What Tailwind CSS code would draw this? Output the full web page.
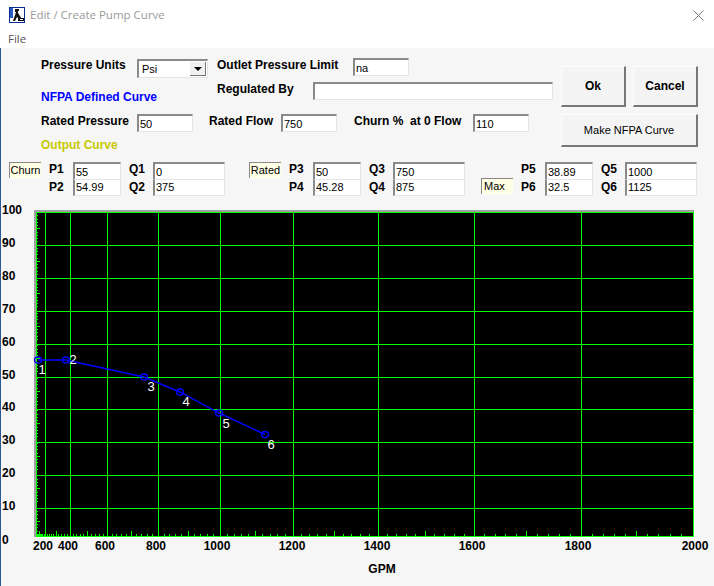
<!DOCTYPE html>
<html lang="en">
<head>
  <meta charset="UTF-8" />
  <title>Edit / Create Pump Curve</title>
  <script src="https://cdn.jsdelivr.net/npm/@tailwindcss/browser@4"></script>
</head>
<body class="w-[714px] h-[586px] overflow-hidden bg-white font-['Liberation_Sans',sans-serif] text-[12px] text-black">
  <!-- title bar -->
  <header class="h-[30px] flex items-center pl-[9px] pr-[10px]">
    <svg class="w-[16px] h-[16px]" viewBox="0 0 16 16">
      <rect x="0.5" y="0.5" width="15" height="15" fill="#fff" stroke="#0a2f8f" />
      <path d="M1 1h3v10H1z" fill="#2a5fc8" />
      <path d="M6 2h4v2H9v2l2 3 1 2h3v3H9V11L8 10l-2 4H4l2-6 1-3H6z" fill="#111" />
      <path d="M11 12h3v1h-3z" fill="#fff" />
    </svg>
    <span class="ml-[5px] font-['Open_Sans',sans-serif] text-[11.5px] text-[#9a9a9a]">Edit / Create Pump Curve</span>
    <svg class="ml-auto w-[11px] h-[11px]" viewBox="0 0 11 11">
      <path d="M0.5 0.5l10 10M10.5 0.5l-10 10" stroke="#777" fill="none" />
    </svg>
  </header>
  <nav class="h-[18px] pl-[8px] font-['Open_Sans',sans-serif] text-[11.5px] leading-[18px] text-[#555]">File</nav>

  <main class="h-[538px] bg-[#f6f6f6] border-l border-l-[#2b5797]">
    <section class="flex h-[106px]">
      <div class="w-[560px] pl-[40px] font-bold">
        <div class="flex items-start h-[20px] mt-[10px]">
          <label class="w-[96px] leading-[14px]">Pressure Units</label>
          <div class="flex items-center justify-between w-[71px] h-[19px] mt-[1px] pl-[3px] pr-[1px] bg-white border-t-2 border-l-2 border-t-[#8a8a8a] border-l-[#8a8a8a] border-r border-b border-r-[#e4e4e4] border-b-[#e4e4e4] font-normal">
            <span class="text-[11px]">Psi</span>
            <span class="flex items-center justify-center w-[16px] h-[14px] bg-[#f0f0f0] border-r border-b border-r-[#777] border-b-[#777]">
              <svg class="w-[8px] h-[4px]" viewBox="0 0 8 4"><path d="M0 0h8L4 4z" fill="#000" /></svg>
            </span>
          </div>
          <label class="w-[136px] ml-[9px] leading-[14px]">Outlet Pressure Limit</label>
          <input value="na" class="w-[56px] h-[18px] pl-[1px] bg-white border-t-2 border-l-2 border-t-[#8a8a8a] border-l-[#8a8a8a] border-r border-b border-r-[#e4e4e4] border-b-[#e4e4e4] font-normal text-[11px]" />
        </div>
        <div class="flex items-start h-[18px] mt-[4px]">
          <label class="w-[176px] mt-[6px] leading-[18px] text-[#0000ff]">NFPA Defined Curve</label>
          <label class="w-[96px] -mt-[2px] leading-[18px]">Regulated By</label>
          <input class="w-[240px] h-[18px] bg-white border-t-2 border-l-2 border-t-[#8a8a8a] border-l-[#8a8a8a] border-r border-b border-r-[#e4e4e4] border-b-[#e4e4e4]" />
        </div>
        <div class="flex items-start h-[18px] mt-[14px]">
          <label class="w-[96px] leading-[14px]">Rated Pressure</label>
          <input value="50" class="w-[56px] h-[18px] pl-[1px] bg-white border-t-2 border-l-2 border-t-[#8a8a8a] border-l-[#8a8a8a] border-r border-b border-r-[#e4e4e4] border-b-[#e4e4e4] font-normal text-[11px]" />
          <label class="w-[72px] ml-[16px] leading-[14px]">Rated Flow</label>
          <input value="750" class="w-[56px] h-[18px] pl-[1px] bg-white border-t-2 border-l-2 border-t-[#8a8a8a] border-l-[#8a8a8a] border-r border-b border-r-[#e4e4e4] border-b-[#e4e4e4] font-normal text-[11px]" />
          <label class="w-[119px] ml-[17px] leading-[14px] whitespace-pre">Churn %  at 0 Flow</label>
          <input value="110" class="w-[56px] h-[18px] pl-[1px] bg-white border-t-2 border-l-2 border-t-[#8a8a8a] border-l-[#8a8a8a] border-r border-b border-r-[#e4e4e4] border-b-[#e4e4e4] font-normal text-[11px]" />
        </div>
        <div class="h-[18px] mt-[4px] leading-[18px] text-[#c8c800]">Output Curve</div>
      </div>
      <div class="w-[137px] pt-[18px]">
        <div class="flex justify-between">
          <button class="w-[65px] h-[41px] font-bold bg-[#f4f4f4] border border-white border-r-2 border-b-2 border-r-[#777] border-b-[#777]">Ok</button>
          <button class="w-[65px] h-[41px] font-bold bg-[#f4f4f4] border border-white border-r-2 border-b-2 border-r-[#777] border-b-[#777]">Cancel</button>
        </div>
        <button class="w-[137px] h-[33px] mt-[7px] text-[11px] bg-[#f4f4f4] border border-white border-r-2 border-b-2 border-r-[#777] border-b-[#777]">Make NFPA Curve</button>
      </div>
    </section>

    <!-- curve points -->
    <section class="flex items-start pl-[8px] mt-[8px] font-bold">
      <span class="w-[32px] h-[16px] text-center text-[11px] leading-[14px] font-normal bg-[#ffffe6] border-t border-l border-t-[#888] border-l-[#888]">Churn</span>
      <div class="grid grid-cols-[24px_48px_8px_24px_72px] ml-[8px]">
        <label class="leading-[14px]">P1</label>
        <input value="55" class="h-[18px] pl-[1px] bg-white border-t-2 border-l-2 border-t-[#8a8a8a] border-l-[#8a8a8a] border-r border-b border-r-[#e4e4e4] border-b-[#e4e4e4] font-normal text-[11px] w-[48px]" />
        <i></i>
        <label class="leading-[14px]">Q1</label>
        <input value="0" class="h-[18px] pl-[1px] bg-white border-t-2 border-l-2 border-t-[#8a8a8a] border-l-[#8a8a8a] border-r border-b border-r-[#e4e4e4] border-b-[#e4e4e4] font-normal text-[11px] w-[72px]" />
        <label class="leading-[14px]">P2</label>
        <input value="54.99" class="h-[16px] pl-[1px] bg-white border-l-2 border-l-[#8a8a8a] border-r border-b border-r-[#e4e4e4] border-b-[#e4e4e4] font-normal text-[11px] w-[48px]" />
        <i></i>
        <label class="leading-[14px]">Q2</label>
        <input value="375" class="h-[16px] pl-[1px] bg-white border-l-2 border-l-[#8a8a8a] border-r border-b border-r-[#e4e4e4] border-b-[#e4e4e4] font-normal text-[11px] w-[72px]" />
      </div>
      <span class="w-[32px] h-[16px] ml-[24px] text-center text-[11px] leading-[14px] font-normal bg-[#ffffe6] border-t border-l border-t-[#888] border-l-[#888]">Rated</span>
      <div class="grid grid-cols-[24px_48px_8px_24px_72px] ml-[8px]">
        <label class="leading-[14px]">P3</label>
        <input value="50" class="h-[18px] pl-[1px] bg-white border-t-2 border-l-2 border-t-[#8a8a8a] border-l-[#8a8a8a] border-r border-b border-r-[#e4e4e4] border-b-[#e4e4e4] font-normal text-[11px] w-[48px]" />
        <i></i>
        <label class="leading-[14px]">Q3</label>
        <input value="750" class="h-[18px] pl-[1px] bg-white border-t-2 border-l-2 border-t-[#8a8a8a] border-l-[#8a8a8a] border-r border-b border-r-[#e4e4e4] border-b-[#e4e4e4] font-normal text-[11px] w-[72px]" />
        <label class="leading-[14px]">P4</label>
        <input value="45.28" class="h-[16px] pl-[1px] bg-white border-l-2 border-l-[#8a8a8a] border-r border-b border-r-[#e4e4e4] border-b-[#e4e4e4] font-normal text-[11px] w-[48px]" />
        <i></i>
        <label class="leading-[14px]">Q4</label>
        <input value="875" class="h-[16px] pl-[1px] bg-white border-l-2 border-l-[#8a8a8a] border-r border-b border-r-[#e4e4e4] border-b-[#e4e4e4] font-normal text-[11px] w-[72px]" />
      </div>
      <span class="w-[32px] h-[16px] ml-[16px] mt-[16px] pl-[2px] text-[11px] leading-[14px] font-normal bg-[#ffffe6] border-t border-l border-t-[#888] border-l-[#888]">Max</span>
      <div class="grid grid-cols-[24px_48px_8px_24px_72px] ml-[8px]">
        <label class="leading-[14px]">P5</label>
        <input value="38.89" class="h-[18px] pl-[1px] bg-white border-t-2 border-l-2 border-t-[#8a8a8a] border-l-[#8a8a8a] border-r border-b border-r-[#e4e4e4] border-b-[#e4e4e4] font-normal text-[11px] w-[48px]" />
        <i></i>
        <label class="leading-[14px]">Q5</label>
        <input value="1000" class="h-[18px] pl-[1px] bg-white border-t-2 border-l-2 border-t-[#8a8a8a] border-l-[#8a8a8a] border-r border-b border-r-[#e4e4e4] border-b-[#e4e4e4] font-normal text-[11px] w-[72px]" />
        <label class="leading-[14px]">P6</label>
        <input value="32.5" class="h-[16px] pl-[1px] bg-white border-l-2 border-l-[#8a8a8a] border-r border-b border-r-[#e4e4e4] border-b-[#e4e4e4] font-normal text-[11px] w-[48px]" />
        <i></i>
        <label class="leading-[14px]">Q6</label>
        <input value="1125" class="h-[16px] pl-[1px] bg-white border-l-2 border-l-[#8a8a8a] border-r border-b border-r-[#e4e4e4] border-b-[#e4e4e4] font-normal text-[11px] w-[72px]" />
      </div>
    </section>

    <!-- chart, drawn in page coordinates -->
    <svg class="block mt-[2px] -ml-[1px]" width="714" height="388" viewBox="0 198 714 388" font-family="Liberation Sans" font-size="12">
      <rect x="34" y="210" width="660" height="327" fill="#a0a0a0" />
      <rect x="36" y="212" width="658" height="325" fill="#000" />
      <rect x="36" y="537" width="659" height="1" fill="#fff" />
      <rect x="694" y="212" width="1" height="326" fill="#fff" />
      <g stroke="#00ff00" fill="none" shape-rendering="crispEdges">
        <path d="M45.5 212V536M70.5 212V536M107.5 212V536M158.5 212V536M220.5 212V536M293.5 212V536M378.5 212V536M474.5 212V536M581.5 212V536M693.5 212V536" />
        <path d="M36 212.5H694M36 245.5H694M36 278.5H694M36 311.5H694M36 344.5H694M36 377.5H694M36 409.5H694M36 442.5H694M36 475.5H694M36 508.5H694M36 536.5H694" />
        <path d="M36.5 212V536" />
        <path id="ticks" />
      </g>
      <g stroke="#0000ff" stroke-width="1.4" fill="none">
        <path d="M38 360H66L144 377L180 392L219 413L265 434.5" />
        <ellipse cx="38" cy="360" rx="3.5" ry="3" />
        <ellipse cx="66" cy="360" rx="3.5" ry="3" />
        <ellipse cx="144" cy="377" rx="3.5" ry="3" />
        <ellipse cx="180" cy="392" rx="3.5" ry="3" />
        <ellipse cx="219" cy="413" rx="3.5" ry="3" />
        <ellipse cx="265" cy="434.5" rx="3.5" ry="3" />
      </g>
      <g fill="#fff" text-anchor="middle" font-size="13">
        <text x="42" y="374">1</text>
        <text x="73" y="364">2</text>
        <text x="151" y="391">3</text>
        <text x="186" y="406">4</text>
        <text x="226" y="428">5</text>
        <text x="271" y="449">6</text>
      </g>
      <g font-weight="bold" fill="#000">
        <text x="2" y="214">100</text>
        <text x="2" y="247">90</text>
        <text x="2" y="280">80</text>
        <text x="2" y="313">70</text>
        <text x="2" y="346">60</text>
        <text x="2" y="379">50</text>
        <text x="2" y="411">40</text>
        <text x="2" y="444">30</text>
        <text x="2" y="477">20</text>
        <text x="2" y="510">10</text>
        <text x="2" y="544">0</text>
      </g>
      <g font-weight="bold" fill="#000" text-anchor="middle">
        <text x="43" y="550">200</text>
        <text x="68" y="550">400</text>
        <text x="105" y="550">600</text>
        <text x="156" y="550">800</text>
        <text x="217" y="550">1000</text>
        <text x="292" y="550">1200</text>
        <text x="377" y="550">1400</text>
        <text x="472" y="550">1600</text>
        <text x="578" y="550">1800</text>
        <text x="695" y="550">2000</text>
        <text x="382" y="573">GPM</text>
      </g>
    </svg>
  </main>

  <script>
    // x axis is Q^1.85, pinned to the measured grid line of each 200 gpm step
    var stops = [37, 45, 70, 107, 158, 220, 293, 378, 474, 581, 693];
    var d = "";
    for (var q = 20; q < 2000; q += 20) {
      if (q % 200 == 0) continue;
      var a = Math.floor(q / 200), lo = a * 200, hi = lo + 200;
      var t = (Math.pow(q, 1.85) - Math.pow(lo, 1.85)) / (Math.pow(hi, 1.85) - Math.pow(lo, 1.85));
      var x = Math.round(stops[a] + (stops[a + 1] - stops[a]) * t) + 0.5;
      d += "M" + x + " 536V" + (q % 100 == 0 ? 531 : 534);
    }
    for (var i = 1; i < 100; i++) {
      if (i % 10 == 0) continue;
      var y = Math.round(212 + 3.25 * i) + 0.5;
      d += "M36 " + y + "H" + (i % 5 == 0 ? 40 : 38);
    }
    document.getElementById("ticks").setAttribute("d", d);
  </script>
</body>
</html>
